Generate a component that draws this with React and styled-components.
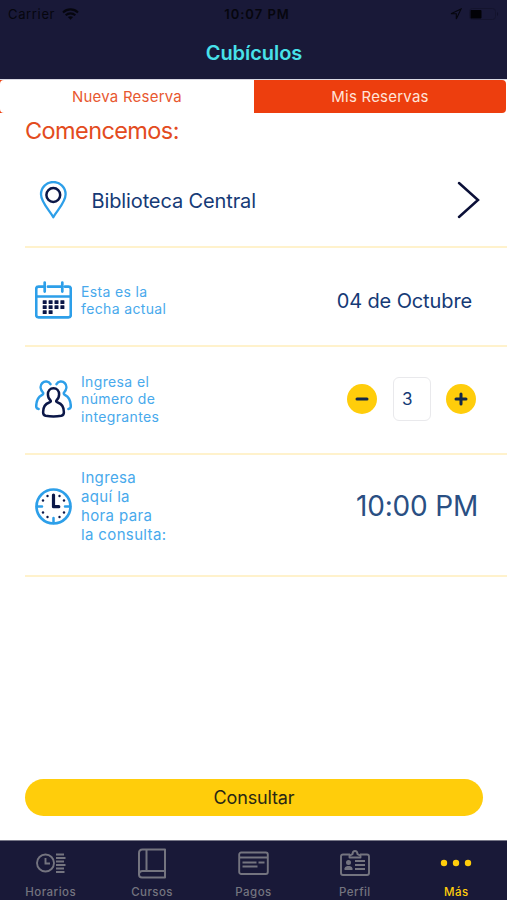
import React from 'react';
import styled, { createGlobalStyle } from 'styled-components';

const c = {
  night: '#191938', cyan: '#48e1ea', orange: '#ed3e0e', navy: '#153a76',
  ink: '#0b1748', sky: '#2d9fe9', label: '#48a9ec', yellow: '#ffcd0b', line: '#fff2cc', gray: '#74747f',
};

const GlobalStyle = createGlobalStyle`
  * { box-sizing: border-box; }
  body { margin: 0; background: #fff; font-family: Inter, "Liberation Sans", sans-serif; }
  button { border: 0; padding: 0; font: inherit; }
  svg { display: block; flex: none; }
`;

const Screen = styled.div`
  width: 507px; height: 900px; display: flex; flex-direction: column;
  background: #fff; overflow: hidden;
`;
const Header = styled.header`
  height: 79px; flex: none; background: ${c.night};
  display: flex; flex-direction: column;
`;
const StatusBar = styled.div`
  height: 28px; padding: 0 7px 0 8px; color: #06060e;
  display: grid; grid-template-columns: 1fr auto 1fr; align-items: center;
`;
const StatusGroup = styled.div`
  display: flex; align-items: center; gap: 7px;
  justify-content: ${p => (p.$end ? 'flex-end' : 'flex-start')};
`;
const Carrier = styled.span`font-size: 13px; letter-spacing: 0.65px;`;
const Clock = styled.span`padding-left: 6px; font-size: 13px; font-weight: 600; letter-spacing: 1px;`;
const Title = styled.h1`
  margin: 0; height: 50px; line-height: 50px; text-align: center; padding-left: 1px;
  color: ${c.cyan}; font-size: 20px; font-weight: 600; letter-spacing: -0.05px;
`;
const Segments = styled.div`
  height: 34px; flex: none; display: flex; padding-right: 1px;
  border-top: 1px solid #d9d9e3;
  background: linear-gradient(90deg, ${c.orange} 6px, #fff 6px);
`;
const Segment = styled.button`
  width: ${p => (p.$active ? 254 : 252)}px; height: 33px;
  border-radius: ${p => (p.$active ? '4px 0 0 4px' : '0 4px 4px 0')};
  background: ${p => (p.$active ? '#fff' : c.orange)};
  color: ${p => (p.$active ? '#e85830' : '#ffe4d9')};
  font-size: 15px; line-height: 34px; letter-spacing: 0.22px;
`;
const Body = styled.main`flex: 1; display: flex; flex-direction: column; padding-left: 25px;`;
const Heading = styled.h2`
  margin: 0; height: 41px; line-height: 36px; color: #e34b20;
  font-size: 23.5px; font-weight: 400; letter-spacing: -0.6px;
`;
const Row = styled.section`
  height: ${p => p.$h}px; flex: none; display: flex; align-items: center;
  border-bottom: 2px solid ${c.line};
  padding: ${p => p.$drop || 0}px ${p => p.$right}px ${p => p.$lift || 0}px 10px;
`;
const IconSlot = styled.div`width: ${p => p.$w || 46}px; flex: none;`;
const Place = styled.span`
  font-size: 20px; line-height: 24px; padding-top: 1px; color: ${c.navy}; letter-spacing: -0.12px;
`;
const Label = styled.span`
  color: ${c.label}; font-size: ${p => p.$size || 14}px; line-height: ${p => p.$lh}px;
  letter-spacing: 0.36px; white-space: pre-line;
`;
const End = styled.div`margin-left: auto; display: flex; align-items: center;`;
const Time = styled.span`font-size: 28px; color: #2a4f83; letter-spacing: -0.2px;`;
const Round = styled.button`
  width: 30px; height: 30px; border-radius: 50%; background: ${c.yellow};
  display: flex; align-items: center; justify-content: center;
`;
const Count = styled.div`
  width: 38px; height: 44px; margin: 0 15px 0 16px; border: 1px solid #e9e9ec; border-radius: 6px;
  padding-left: 8px; line-height: 42px; font-size: 17px; color: ${c.navy};
`;
const Submit = styled.button`
  margin: auto 24px 24px 0; height: 37px; border-radius: 19px; background: ${c.yellow};
  color: #292715; font-size: 18px; line-height: 37px; letter-spacing: -0.15px;
`;
const TabBar = styled.nav`
  height: 60px; flex: none; background: ${c.night}; border-top: 1px solid #777788;
  display: grid; grid-template-columns: repeat(5, 1fr);
`;
const Tab = styled.div`
  display: flex; flex-direction: column; align-items: center;
  color: ${p => (p.$active ? c.yellow : c.gray)};
  font-size: 11.5px; font-weight: 500; letter-spacing: 0.45px;
`;
const TabIcon = styled.div`height: 44px; display: flex; align-items: center; justify-content: center;`;
const TabText = styled.span`line-height: 15px;`;

const Wifi = () => (
  <svg width="17" height="12" viewBox="0 0 17 12" fill="none" stroke="currentColor" strokeWidth="2.1">
    <path d="M1 4.4C5.3.4 11.7.4 16 4.4M3.7 7.2C6.4 4.7 10.6 4.7 13.3 7.2" />
    <path d="M8.5 11.7 5.9 9.1C7.4 7.8 9.6 7.8 11.1 9.1Z" fill="currentColor" stroke="none" />
  </svg>
);
const Location = () => (
  <svg width="12" height="12" viewBox="0 0 12 12" fill="none" stroke="currentColor" strokeWidth="1.1">
    <path d="M1 5.8 11 1 6.3 11V5.8Z" />
  </svg>
);
const Battery = () => (
  <svg width="31" height="12" viewBox="0 0 31 12">
    <rect x=".5" y=".5" width="26" height="11" rx="3" fill="none" stroke="#14142e" />
    <rect x="1.5" y="2" width="11" height="8.5" rx="1" fill="#020206" />
    <path d="M28 4v4c1.5-.5 1.5-3.5 0-4" fill="#11112a" />
  </svg>
);
const Pin = () => (
  <svg width="36" height="38" viewBox="0 0 36 38" fill="none">
    <path d="M18.3 36.2C14 28.8 6 21.3 6 13.3a12.3 12.3 0 0 1 24.6 0c0 8-8 15.5-12.3 22.9Z" stroke={c.sky} strokeWidth="2.3" strokeLinejoin="round" />
    <circle cx="18.3" cy="14" r="6.9" stroke={c.ink} strokeWidth="2.5" />
  </svg>
);
const Chevron = () => (
  <svg width="24" height="38" viewBox="0 0 24 38" fill="none" stroke="#0b1038" strokeWidth="2.5" strokeLinecap="round" strokeLinejoin="miter">
    <path d="M2 2 21 19 2 36" />
  </svg>
);
const days = [[0, 0], [1, 0], [2, 0], [3, 0], [0, 1], [1, 1], [2, 1], [3, 1], [0, 2], [1, 2]];
const CalendarIcon = () => (
  <svg width="37" height="38" viewBox="0 0 37 38" fill="none">
    <path d="M9.700 5.700H3.500A2.300 2.300 0 0 0 1.200 8V34a2.300 2.300 0 0 0 2.300 2.300h30A2.300 2.300 0 0 0 35.800 34V8A2.300 2.300 0 0 0 33.500 5.700H30M13 5.700h14.300M1.200 15.500h34.600M9.700 1.600v9M27.300 1.600v9" stroke={c.sky} strokeWidth="2.700" strokeLinecap="round" />
    {days.map(([x, y]) => <rect key={`${x}-${y}`} x={7.7 + x * 5.9} y={19.2 + y * 5} width="4" height="3.800" rx=".5" fill={c.ink} />)}
  </svg>
);
const People = () => (
  <svg width="37" height="38" viewBox="0 0 37 38" fill="none" strokeWidth="2.500" strokeLinecap="round" strokeLinejoin="round">
    <g stroke={c.sky}>
      <path d="M15.500 4.200C13.700 1 9.500.7 7.200 3.200c-2.500 2.700-1.700 6.700.7 9.300.7 1.200.1 2.100-1.100 2.700C3 17.200 1.200 20.500 1.200 26.500q0 2 2.400 2.500" />
      <path d="M21.500 4.200C23.300 1 27.500.7 29.800 3.200c2.500 2.700 1.700 6.700-.7 9.300-.7 1.200-.1 2.100 1.100 2.700 3.800 2 5.600 5.300 5.600 11.300q0 2-2.400 2.500" />
    </g>
    <path stroke={c.ink} d="M18.500 8.200c-3.500 0-5.600 2.700-5.600 6.100 0 2.600 1.100 4.800 2.500 6 .8 1 .3 1.700-1.200 2.200-4.200 1.300-6.100 5-6.100 9.800 0 2.200.7 3.100 2.600 3.500 5.200.8 10.400.8 15.600 0 1.900-.4 2.600-1.300 2.600-3.500 0-4.800-1.900-8.500-6.100-9.800-1.500-.5-2-1.200-1.200-2.200 1.400-1.200 2.500-3.400 2.500-6 0-3.400-2.100-6.100-5.600-6.100Z" />
  </svg>
);
const ClockIcon = () => (
  <svg width="37" height="37" viewBox="0 0 37 37" fill="none">
    <circle cx="18.500" cy="18.500" r="17" stroke={c.sky} strokeWidth="2.700" />
    <path d="M18.500 35v-5M2 18.500h5M30 18.500h5" stroke={c.sky} strokeWidth="2.500" strokeLinecap="round" />
    <path d="M18.500 7v11.700h5.300" stroke={c.ink} strokeWidth="3.200" strokeLinecap="round" strokeLinejoin="round" />
    {[[12.5, 8], [24.5, 8], [8, 12.5], [29, 12.5], [8, 24.5], [29, 24.5], [12.5, 29], [24.5, 29]].map(([x, y]) =>
      <circle key={`${x}-${y}`} cx={x} cy={y} r="1.200" fill={c.ink} />)}
  </svg>
);
const Sign = ({ plus }) => (
  <svg width="14" height="14" viewBox="0 0 14 14" stroke="#132748" strokeWidth="3" strokeLinecap="round">
    <path d={plus ? 'M2 7h10M7 2v10' : 'M2 7h10'} />
  </svg>
);
const line = { fill: 'none', stroke: 'currentColor', strokeWidth: 1.9 };
const ScheduleIcon = () => (
  <svg width="30" height="22" viewBox="0 0 30 22" {...line}>
    <circle cx="9.500" cy="11" r="8.500" /><path d="M9.500 6v5.500h4.500M20 2.500h8M20 6h9.500M20 9.500h8M20 13h9.500M20 16.500h8M20 20h8.500" />
  </svg>
);
const BookIcon = () => (
  <svg width="28" height="31" viewBox="0 0 28 31" {...line} strokeWidth="2" strokeLinejoin="round">
    <path d="M27 23V1.500H4.500Q1 1.500 1 5v21.500Q1 29.500 4 29.500h23V23H4.500Q1 23 1 26.500M8.500 1.500V23" />
  </svg>
);
const CardIcon = () => (
  <svg width="31" height="25" viewBox="0 0 31 25" {...line}>
    <rect x="1.200" y="1.500" width="28.600" height="21.500" rx="2" /><path d="M1 6.500h29M4.500 11.500h14M20.500 11.500h6M4.500 15.500h15" />
  </svg>
);
const BadgeIcon = () => (
  <svg width="30" height="26" viewBox="0 0 30 26" {...line} strokeLinejoin="round">
    <path d="M10 4.500H3Q1 4.500 1 6.500V23q0 2 2 2h24q2 0 2-2V6.500q0-2-2-2h-7" />
    <path d="M9.500 7.500V5.700l3-1.500Q12.700 1 15 1t2.500 3.200l3 1.500v1.800ZM15 11h10M15 15h10M15 19h10" />
    <circle cx="8.500" cy="12.500" r="2.500" fill="currentColor" stroke="none" />
    <path d="M4.500 20v-1.500q0-2 2.700-2.500h2.600q2.700.5 2.700 2.500V20Z" fill="currentColor" stroke="none" />
  </svg>
);
const Dots = () => (
  <svg width="32" height="8" viewBox="0 0 32 8" fill="currentColor">
    <circle cx="4" cy="4" r="3.200" /><circle cx="16" cy="4" r="3.200" /><circle cx="28" cy="4" r="3.200" />
  </svg>
);
const tabs = [['Horarios', ScheduleIcon], ['Cursos', BookIcon], ['Pagos', CardIcon], ['Perfil', BadgeIcon], ['Más', Dots]];

export default function App() {
  return (
    <Screen>
      <GlobalStyle />
      <Header>
        <StatusBar>
          <StatusGroup><Carrier>Carrier</Carrier><Wifi /></StatusGroup>
          <Clock>10:07 PM</Clock>
          <StatusGroup $end><Location /><Battery /></StatusGroup>
        </StatusBar>
        <Title>Cubículos</Title>
      </Header>
      <Segments><Segment $active>Nueva Reserva</Segment><Segment>Mis Reservas</Segment></Segments>
      <Body>
        <Heading>Comencemos:</Heading>
        <Row $h={94} $right={26}>
          <IconSlot $w={56.5}><Pin /></IconSlot>
          <Place>Biblioteca Central</Place><End><Chevron /></End>
        </Row>
        <Row $h={99} $right={35} $drop={7}>
          <IconSlot><CalendarIcon /></IconSlot>
          <Label $lh={17}>{'Esta es la\nfecha actual'}</Label>
          <End><Place>04 de Octubre</Place></End>
        </Row>
        <Row $h={108} $right={31} $lift={2}>
          <IconSlot><People /></IconSlot>
          <Label $lh={17.3}>{'Ingresa el\nnúmero de\nintegrantes'}</Label>
          <End><Round aria-label="Restar"><Sign /></Round><Count>3</Count><Round aria-label="Sumar"><Sign plus /></Round></End>
        </Row>
        <Row $h={122} $right={29} $lift={18}>
          <IconSlot><ClockIcon /></IconSlot>
          <Label $size={15} $lh={19}>{'Ingresa\naquí la\nhora para\nla consulta:'}</Label>
          <End><Time>10:00 PM</Time></End>
        </Row>
        <Submit>Consultar</Submit>
      </Body>
      <TabBar>
        {tabs.map(([name, Icon]) => (
          <Tab key={name} $active={name === 'Más'}><TabIcon><Icon /></TabIcon><TabText>{name}</TabText></Tab>
        ))}
      </TabBar>
    </Screen>
  );
}
